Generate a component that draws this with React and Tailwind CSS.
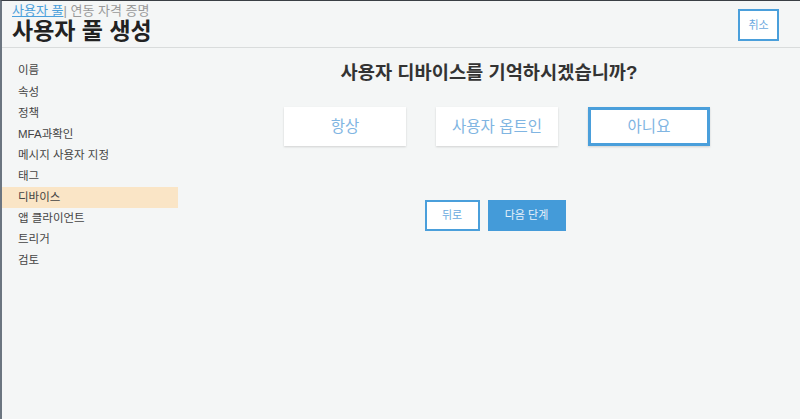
export default function App() {
  const items = ["이름", "속성", "정책", "MFA과확인", "메시지 사용자 지정", "태그", "디바이스", "앱 클라이언트", "트리거", "검토"];
  const font = { fontFamily: '"Liberation Sans", "Noto Sans CJK KR", sans-serif' };
  return (
    <div className="w-[800px] h-[419px] bg-[#f4f6f6] border-t border-t-[#3a3f45] border-l-2 border-l-[#6b7580] flex flex-col overflow-hidden" style={font}>
      <div className="h-[47px] shrink-0 border-b border-[#d9dcdc] flex justify-between items-start pl-[10px] pr-[21px]">
        <div className="flex flex-col">
          <div className="text-[13px] leading-[16px] mt-[2px] text-[#888]">
            <span className="text-[#4a9fdb] underline">사용자 풀</span>
            <span className="text-[#999]">| 연동 자격 증명</span>
          </div>
          <div className="text-[23px] leading-[26px] font-bold text-[#222] -mt-[1px]">사용자 풀 생성</div>
        </div>
        <button className="mt-[8px] w-[41px] h-[32px] border-2 border-[#4a9fdb] bg-white text-[11px] text-[#6aa9de] flex items-center justify-center">취소</button>
      </div>
      <div className="flex flex-1">
        <div className="w-[176px] shrink-0 pt-[12.5px] flex flex-col">
          {items.map((t) => (
            <div key={t} className={`h-[21.1px] flex items-center pl-[16px] text-[11.5px] text-[#444] ${t === "디바이스" ? "bg-[#fae5c6]" : ""}`}>{t}</div>
          ))}
        </div>
        <div className="flex-1 flex flex-col items-center pt-[12px]">
          <div className="text-[18.7px] leading-[26px] font-bold text-[#333]">사용자 디바이스를 기억하시겠습니까?</div>
          <div className="flex gap-[30px] mt-[21px] ml-[16px]">
            <button className="w-[122px] h-[39px] bg-white shadow-[0_1px_2px_rgba(0,0,0,0.15)] text-[15.5px] text-[#80b5e2]">항상</button>
            <button className="w-[122px] h-[39px] bg-white shadow-[0_1px_2px_rgba(0,0,0,0.15)] text-[15.5px] text-[#80b5e2]">사용자 옵트인</button>
            <button className="w-[122px] h-[39px] bg-white border-[3px] border-[#4a9fdb] shadow-[0_1px_2px_rgba(0,0,0,0.15)] text-[15.5px] text-[#80b5e2]">아니요</button>
          </div>
          <div className="flex gap-[8px] mt-[54px] ml-[12px]">
            <button className="w-[55px] h-[31px] bg-white border-2 border-[#4a9fdb] text-[11px] text-[#6aa9de]">뒤로</button>
            <button className="w-[78px] h-[31px] bg-[#449bd9] text-[11px] text-[#e8f1fa]">다음 단계</button>
          </div>
        </div>
      </div>
    </div>
  );
}
